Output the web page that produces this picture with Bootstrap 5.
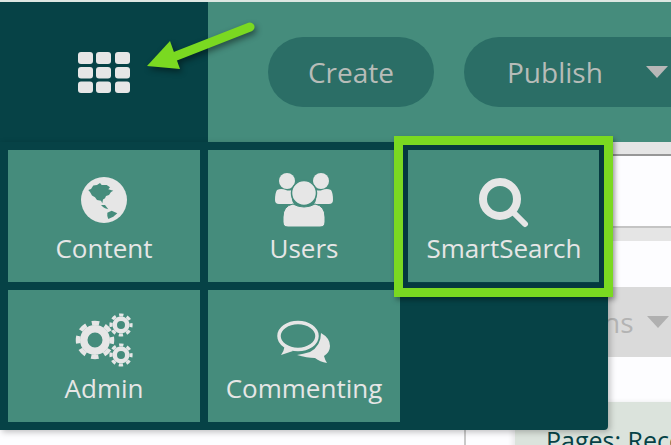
<!DOCTYPE html>
<html lang="en">
<head>
    <meta charset="UTF-8">
    <meta name="viewport" content="width=device-width, initial-scale=1.0">
    <title>Menu</title>
    <link href="https://cdn.jsdelivr.net/npm/bootstrap@5.3.0/dist/css/bootstrap.min.css" rel="stylesheet">
    <style>
        html, body { height: 100%; overflow: hidden; }
        body { background: #fdfdff; font-family: "Open Sans", "Liberation Sans", sans-serif; }
        .stage { width: 671px; height: 445px; overflow: hidden; }
        .top-strip { height: 2px; background: #dde7e2; }
        .top-bar { height: 140px; background: #458c7c; padding-left: 268px; gap: 30px; }
        .pill-btn { height: 70px; border-radius: 35px; background: #2b6e66; color: #b7bcb8; font-size: 28px; border: 0; padding: 0; flex: none; }
        .pill-create { width: 166px; }
        .pill-publish { width: 240px; padding-left: 43px; gap: 43px; justify-content: flex-start; }
        .caret-down { width: 0; height: 0; border-left: 11px solid transparent; border-right: 11px solid transparent; border-top: 12px solid #b7b7b7; }

        .content-area { height: 303px; }
        .side-col { width: 466px; border-right: 2px solid #c9c9c9; flex: none; }
        .main-col { flex: 1; }
        .band-top { height: 14px; background: #e5e5e5; border-bottom: 2px solid #979797; }
        .band-white { height: 70px; }
        .band-mid { height: 15px; background: #e5e5e5; border-top: 2px solid #c4c4c4; }
        .band-gap { height: 46px; }
        .band-actions { height: 70px; background: #dadada; border-radius: 0 0 6px 0; color: #b3b3b3; font-size: 28px; padding-left: 137px; gap: 13px; }
        .band-actions .caret-down { border-top-color: #b0b0b0; }
        .band-gap2 { height: 45px; }
        .pages-box { background: #dbe3dc; height: 60px; margin-left: 49px; color: #064246; font-size: 25px; font-weight: 500; line-height: 1; padding: 26px 0 0 31px; white-space: nowrap; box-shadow: -3px 0 5px rgba(0,0,0,.08); }

        .menu-panel { position: absolute; left: 0; top: 2px; width: 608px; }
        .menu-head { height: 140px; width: 208px; background: #064246; }
        .menu-grid { display: grid; grid-template-columns: repeat(3, 192px); grid-auto-rows: 132px; gap: 8px; padding: 8px; background: #064246; border-radius: 0 0 4px 0; box-shadow: 2px 2px 6px rgba(0,0,0,.25); }
        .menu-tile { background: #458c7c; color: #e6e6e6; font-size: 26px; line-height: 1; text-decoration: none; }
        .menu-tile svg { display: block; }
        .tile-icon { height: 68px; margin-top: 16px; }
        .tile-label { margin-top: 1px; white-space: nowrap; }
        .highlight-box { position: absolute; left: 394px; top: 136px; width: 219px; height: 161px; border: 9px solid #7ad921; box-shadow: 2px 3px 5px rgba(0,0,0,.35); pointer-events: none; }
        .highlight-inner { position: absolute; inset: 0; border: 5px solid #05393f; }
        .arrow-svg { position: absolute; left: 140px; top: 15px; overflow: visible; filter: drop-shadow(2px 3px 3px rgba(0,0,0,.45)); }
    </style>
</head>
<body>
    <div class="stage position-relative">
        <div class="top-strip"></div>
        <div class="top-bar d-flex align-items-center">
            <button class="pill-btn pill-create d-flex align-items-center justify-content-center">Create</button>
            <button class="pill-btn pill-publish d-flex align-items-center">Publish <span class="caret-down"></span></button>
        </div>
        <div class="content-area d-flex">
            <div class="side-col"></div>
            <div class="main-col">
                <div class="band-top"></div>
                <div class="band-white"></div>
                <div class="band-mid"></div>
                <div class="band-gap"></div>
                <div class="band-actions d-flex align-items-center">ns <span class="caret-down"></span></div>
                <div class="band-gap2"></div>
                <div class="pages-box">Pages: Recent</div>
            </div>
        </div>

        <div class="menu-panel">
            <div class="menu-head d-flex align-items-center justify-content-center">
                <svg width="52" height="41" viewBox="0 0 52 41" fill="#e6e6e6">
                    <rect x="0" y="0" width="15" height="12" rx="3"/><rect x="18" y="0" width="15" height="12" rx="3"/><rect x="37" y="0" width="15" height="12" rx="3"/>
                    <rect x="0" y="15" width="15" height="11.500" rx="3"/><rect x="18" y="15" width="15" height="11.500" rx="3"/><rect x="37" y="15" width="15" height="11.500" rx="3"/>
                    <rect x="0" y="29.500" width="15" height="11.500" rx="3"/><rect x="18" y="29.500" width="15" height="11.500" rx="3"/><rect x="37" y="29.500" width="15" height="11.500" rx="3"/>
                </svg>
            </div>
            <div class="menu-grid">
                <a class="menu-tile d-flex flex-column align-items-center" href="#">
                    <div class="tile-icon d-flex align-items-center justify-content-center">
                        <svg width="46" height="46" viewBox="0 0 46 46">
                            <circle cx="23" cy="23" r="23" fill="#e6e6e6"/>
                            <path fill="#458c7c" d="M7.300 13 L10 12 L12.300 8.500 L16 8 L19 6 L20.700 8 L25.700 8 L29 10.300 L27.300 12.300 L32.300 13.700 L30 15 L28 18 L25 19 L24 21.300 L22 22.500 L21.300 26.300 L20 23.700 L16 23 L14 20.300 L11 18.500 L9 15 Z"/>
                            <path fill="#458c7c" d="M20 28 L24 28 L27.300 32.300 L24 31.300 L22 30 Z"/>
                            <path fill="#458c7c" d="M26.300 35.700 L30.700 33.700 L36.300 36.300 L32.300 39.700 L27.300 42 L26.300 39 Z"/>
                        </svg>
                    </div>
                    <div class="tile-label">Content</div>
                </a>
                <a class="menu-tile d-flex flex-column align-items-center" href="#">
                    <div class="tile-icon d-flex align-items-center justify-content-center">
                        <svg width="58" height="54" viewBox="0 0 58 54" fill="#e6e6e6">
                            <circle cx="12" cy="8" r="8"/><circle cx="46" cy="8" r="8"/>
                            <path d="M2 17 Q6 15 11 17 Q13 18 17 17 L17 20 Q16 28 19 31 L4 31 Q0 31 0 27 Q0 20 2 17Z"/>
                            <path d="M56 17 Q52 15 47 17 Q45 18 41 17 L41 20 Q42 28 39 31 L54 31 Q58 31 58 27 Q58 20 56 17Z"/>
                            <circle cx="29" cy="20" r="12.500" stroke="#458c7c" stroke-width="1.500"/>
                            <path d="M18 31 Q23 34 29 34 Q35 34 40 31 Q50 33 50 44 L50 49 Q50 54 45 54 L13 54 Q8 54 8 49 L8 44 Q8 33 18 31Z" stroke="#458c7c" stroke-width="1"/>
                        </svg>
                    </div>
                    <div class="tile-label">Users</div>
                </a>
                <a class="menu-tile d-flex flex-column align-items-center" href="#">
                    <div class="tile-icon d-flex align-items-center justify-content-center">
                        <svg width="50" height="56" viewBox="0 -6 50 56" fill="none" stroke="#e6e6e6" stroke-linecap="round">
                            <circle cx="21" cy="21" r="17" stroke-width="8"/>
                            <path d="M34 34 L46 46" stroke-width="6"/>
                        </svg>
                    </div>
                    <div class="tile-label">SmartSearch</div>
                </a>
                <a class="menu-tile d-flex flex-column align-items-center" href="#">
                    <div class="tile-icon d-flex align-items-center justify-content-center">
                        <svg width="58" height="54" viewBox="0 0 58 54" fill="none" stroke="#e6e6e6">
                            <circle cx="20" cy="27" r="11.250" stroke-width="7.500"/>
                            <circle cx="20" cy="27" r="17" stroke-width="4.500" stroke-dasharray="7.500 5.850" stroke-dashoffset="3.750"/>
                            <circle cx="46" cy="12" r="6.250" stroke-width="4.500"/>
                            <circle cx="46" cy="12" r="10" stroke-width="3.200" stroke-dasharray="4.300 3.550" stroke-dashoffset="2.150"/>
                            <circle cx="46" cy="42" r="6.250" stroke-width="4.500"/>
                            <circle cx="46" cy="42" r="10" stroke-width="3.200" stroke-dasharray="4.300 3.550" stroke-dashoffset="2.150"/>
                        </svg>
                    </div>
                    <div class="tile-label">Admin</div>
                </a>
                <a class="menu-tile d-flex flex-column align-items-center" href="#">
                    <div class="tile-icon d-flex align-items-center justify-content-center">
                        <svg width="54" height="50" viewBox="0 -6 54 50">
                            <path fill="#e6e6e6" d="M44 12 Q53 17 53 25 Q53 31 47 35 Q48 39 50 42 Q43 41 38 37 Q30 37 20 34 Q26 33 33 31 Q44 25 44 12Z"/>
                            <ellipse cx="21" cy="15" rx="19" ry="13.500" fill="none" stroke="#e6e6e6" stroke-width="3.500"/>
                            <path fill="#e6e6e6" d="M8 24 L13 27 L16 30 L4 34 Q7 30 8 24Z"/>
                        </svg>
                    </div>
                    <div class="tile-label">Commenting</div>
                </a>
            </div>
        </div>
        <div class="highlight-box"><div class="highlight-inner"></div></div>
        <svg class="arrow-svg" width="120" height="60" viewBox="0 0 120 60">
            <path d="M110 12 L36 41" stroke="#7ad921" stroke-width="9" stroke-linecap="round"/>
            <path d="M7 51 L30 26 L40 54 Z" fill="#7ad921"/>
        </svg>
    </div>
    <script src="https://cdn.jsdelivr.net/npm/bootstrap@5.3.0/dist/js/bootstrap.bundle.min.js"></script>
</body>
</html>
